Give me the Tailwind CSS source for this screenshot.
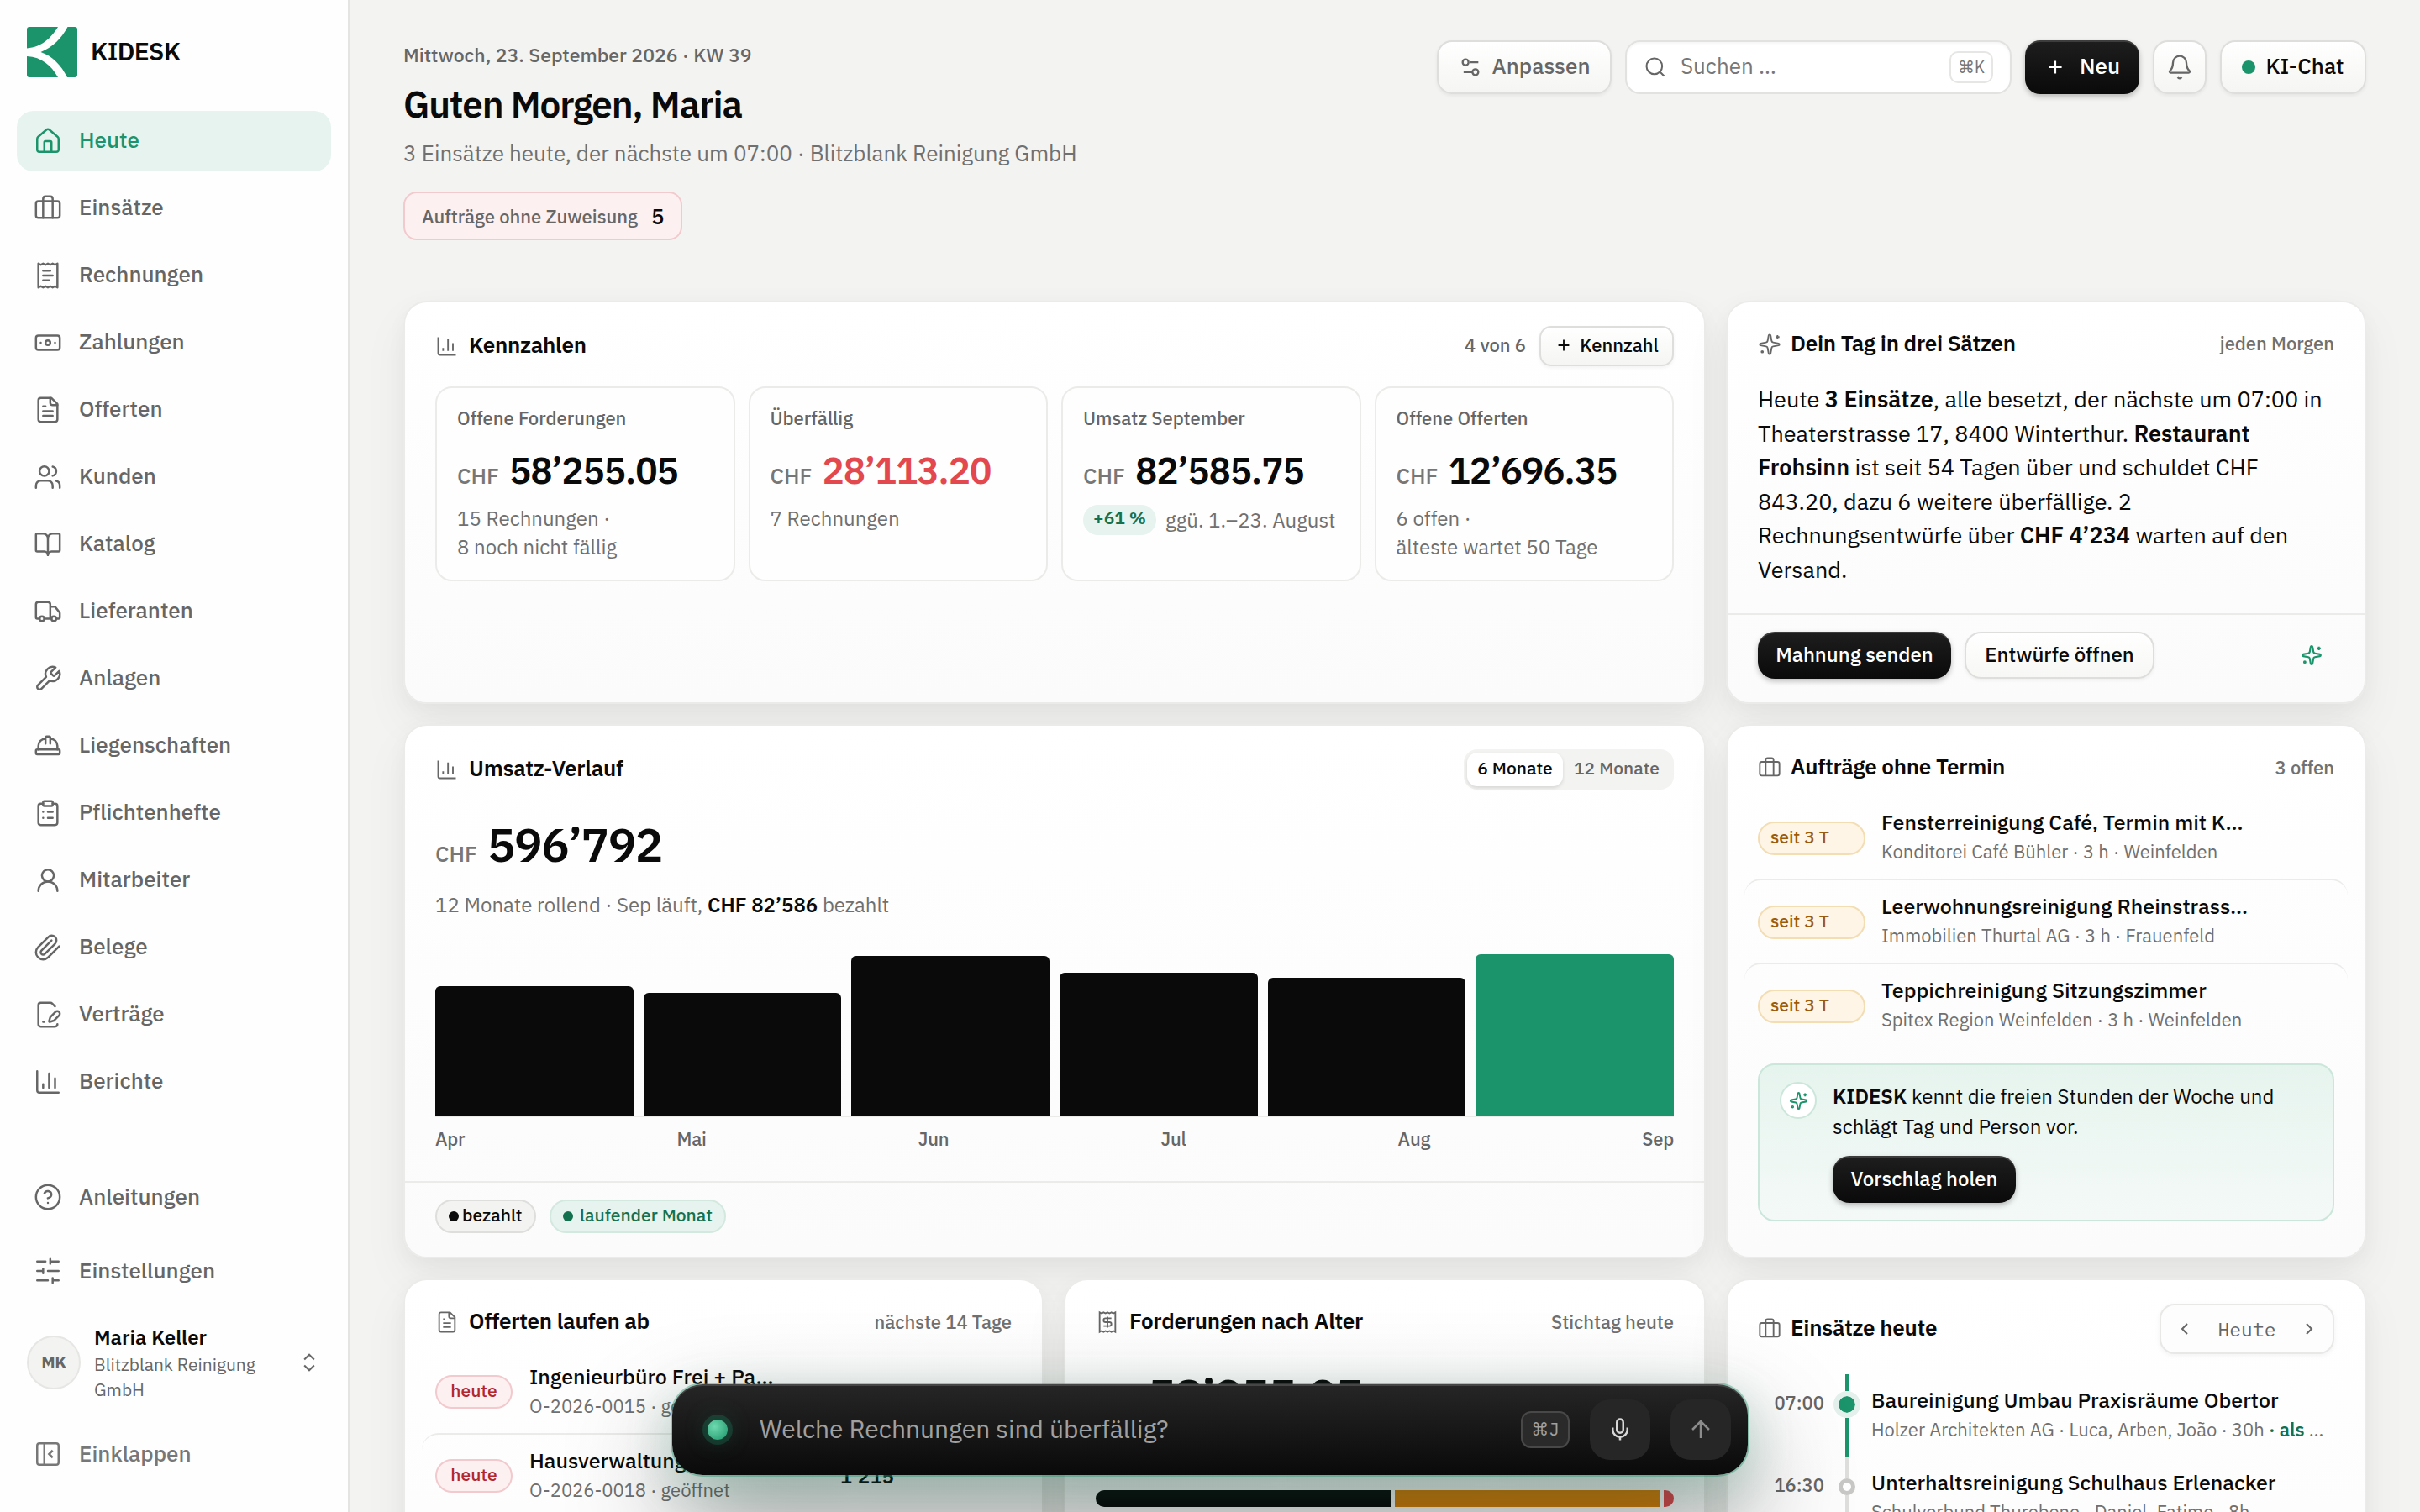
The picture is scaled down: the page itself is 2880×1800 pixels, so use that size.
<!DOCTYPE html>
<html lang="de">
<head>
<meta charset="utf-8">
<title>KIDESK – Heute</title>
<script src="https://cdn.jsdelivr.net/npm/@tailwindcss/browser@4"></script>
</head>
<body class="h-[1800px] w-[2880px] overflow-hidden bg-[#f3f3f1] font-['IBM_Plex_Sans',Roboto,sans-serif] text-[#0a0a0a] antialiased">

<!-- Icon set -->
<svg class="hidden">
  <symbol id="home" viewBox="0 0 24 24"><path d="M15 21v-8a1 1 0 0 0-1-1h-4a1 1 0 0 0-1 1v8"/><path d="M3 10a2 2 0 0 1 .709-1.528l7-6a2 2 0 0 1 2.582 0l7 6A2 2 0 0 1 21 10v9a2 2 0 0 1-2 2H5a2 2 0 0 1-2-2z"/></symbol>
  <symbol id="case" viewBox="0 0 24 24"><path d="M16 20V4a2 2 0 0 0-2-2h-4a2 2 0 0 0-2 2v16"/><rect x="2" y="6" width="20" height="14" rx="2"/></symbol>
  <symbol id="receipt" viewBox="0 0 24 24"><path d="M4 2v20l2-1 2 1 2-1 2 1 2-1 2 1 2-1 2 1V2l-2 1-2-1-2 1-2-1-2 1-2-1-2 1Z"/><path d="M14 8H8M16 12H8M13 16H8"/></symbol>
  <symbol id="receipt-dollar" viewBox="0 0 24 24"><path d="M4 2v20l2-1 2 1 2-1 2 1 2-1 2 1 2-1 2 1V2l-2 1-2-1-2 1-2-1-2 1-2-1-2 1Z"/><path d="M16 8h-6a2 2 0 1 0 0 4h4a2 2 0 1 1 0 4H8M12 17.5v-11"/></symbol>
  <symbol id="banknote" viewBox="0 0 24 24"><rect x="2" y="6" width="20" height="12" rx="2"/><circle cx="12" cy="12" r="2"/><path d="M6 12h.01M18 12h.01"/></symbol>
  <symbol id="file" viewBox="0 0 24 24"><path d="M15 2H6a2 2 0 0 0-2 2v16a2 2 0 0 0 2 2h12a2 2 0 0 0 2-2V7Z"/><path d="M14 2v4a2 2 0 0 0 2 2h4M10 9H8M16 13H8M16 17H8"/></symbol>
  <symbol id="users" viewBox="0 0 24 24"><path d="M16 21v-2a4 4 0 0 0-4-4H6a4 4 0 0 0-4 4v2"/><circle cx="9" cy="7" r="4"/><path d="M22 21v-2a4 4 0 0 0-3-3.87M16 3.13a4 4 0 0 1 0 7.75"/></symbol>
  <symbol id="book" viewBox="0 0 24 24"><path d="M12 7v14"/><path d="M3 18a1 1 0 0 1-1-1V4a1 1 0 0 1 1-1h5a4 4 0 0 1 4 4 4 4 0 0 1 4-4h5a1 1 0 0 1 1 1v13a1 1 0 0 1-1 1h-6a3 3 0 0 0-3 3 3 3 0 0 0-3-3z"/></symbol>
  <symbol id="truck" viewBox="0 0 24 24"><path d="M14 18V6a2 2 0 0 0-2-2H4a2 2 0 0 0-2 2v11a1 1 0 0 0 1 1h2M15 18H9M19 18h2a1 1 0 0 0 1-1v-3.65a1 1 0 0 0-.22-.624l-3.48-4.35A1 1 0 0 0 17.52 8H14"/><circle cx="17" cy="18" r="2"/><circle cx="7" cy="18" r="2"/></symbol>
  <symbol id="wrench" viewBox="0 0 24 24"><path d="M14.7 6.3a1 1 0 0 0 0 1.4l1.6 1.6a1 1 0 0 0 1.4 0l3.77-3.77a6 6 0 0 1-7.94 7.94l-6.91 6.91a2.12 2.12 0 0 1-3-3l6.91-6.91a6 6 0 0 1 7.94-7.94l-3.76 3.76z"/></symbol>
  <symbol id="hat" viewBox="0 0 24 24"><path d="M10 10V5a1 1 0 0 1 1-1h2a1 1 0 0 1 1 1v5M14 6a6 6 0 0 1 6 6v3M4 15v-3a6 6 0 0 1 6-6"/><rect x="2" y="15" width="20" height="4" rx="1"/></symbol>
  <symbol id="clipboard" viewBox="0 0 24 24"><rect x="8" y="2" width="8" height="4" rx="1"/><path d="M16 4h2a2 2 0 0 1 2 2v14a2 2 0 0 1-2 2H6a2 2 0 0 1-2-2V6a2 2 0 0 1 2-2h2M12 11h4M12 16h4M8 11h.01M8 16h.01"/></symbol>
  <symbol id="user" viewBox="0 0 24 24"><circle cx="12" cy="8" r="5"/><path d="M20 21a8 8 0 0 0-16 0"/></symbol>
  <symbol id="clip" viewBox="0 0 24 24"><path d="m21.44 11.05-9.19 9.19a6 6 0 0 1-8.49-8.49l8.57-8.57A4 4 0 1 1 18 8.84l-8.59 8.57a2 2 0 0 1-2.83-2.83l8.49-8.48"/></symbol>
  <symbol id="file-pen" viewBox="0 0 24 24"><path d="m18 5-2.414-2.414A2 2 0 0 0 14.172 2H6a2 2 0 0 0-2 2v16a2 2 0 0 0 2 2h12a2 2 0 0 0 2-2"/><path d="M21.378 12.626a1 1 0 0 0-3.004-3.004l-4.01 4.012a2 2 0 0 0-.506.854l-.837 2.87a.5.5 0 0 0 .62.62l2.87-.837a2 2 0 0 0 .854-.506zM8 18h1"/></symbol>
  <symbol id="chart" viewBox="0 0 24 24"><path d="M3 3v16a2 2 0 0 0 2 2h16M18 17V9M13 17V5M8 17v-3"/></symbol>
  <symbol id="help" viewBox="0 0 24 24"><circle cx="12" cy="12" r="10"/><path d="M9.09 9a3 3 0 0 1 5.83 1c0 2-3 3-3 3M12 17h.01"/></symbol>
  <symbol id="sliders" viewBox="0 0 24 24"><path d="M21 4h-7M10 4H3M21 12h-9M8 12H3M21 20h-5M12 20H3M14 2v4M8 10v4M16 18v4"/></symbol>
  <symbol id="updown" viewBox="0 0 24 24"><path d="m7 15 5 5 5-5M7 9l5-5 5 5"/></symbol>
  <symbol id="panel" viewBox="0 0 24 24"><rect x="3" y="3" width="18" height="18" rx="2"/><path d="M9 3v18M16 15l-3-3 3-3"/></symbol>
  <symbol id="settings" viewBox="0 0 24 24"><path d="M20 7h-9M14 17H5"/><circle cx="17" cy="17" r="3"/><circle cx="7" cy="7" r="3"/></symbol>
  <symbol id="search" viewBox="0 0 24 24"><circle cx="11" cy="11" r="8"/><path d="m21 21-4.3-4.3"/></symbol>
  <symbol id="plus" viewBox="0 0 24 24"><path d="M5 12h14M12 5v14"/></symbol>
  <symbol id="bell" viewBox="0 0 24 24"><path d="M10.268 21a2 2 0 0 0 3.464 0"/><path d="M3.262 15.326A1 1 0 0 0 4 17h16a1 1 0 0 0 .74-1.673C19.41 13.956 18 12.499 18 8A6 6 0 0 0 6 8c0 4.499-1.411 5.956-2.738 7.326"/></symbol>
  <symbol id="sparkles" viewBox="0 0 24 24"><path d="M11.017 2.814a1 1 0 0 1 1.966 0l1.051 5.558a2 2 0 0 0 1.594 1.594l5.558 1.051a1 1 0 0 1 0 1.966l-5.558 1.051a2 2 0 0 0-1.594 1.594l-1.051 5.558a1 1 0 0 1-1.966 0l-1.051-5.558a2 2 0 0 0-1.594-1.594l-5.558-1.051a1 1 0 0 1 0-1.966l5.558-1.051a2 2 0 0 0 1.594-1.594zM20 2.500v4M22 4.500h-4"/><circle cx="4.500" cy="19.500" r=".8"/></symbol>
  <symbol id="left" viewBox="0 0 24 24"><path d="m15 18-6-6 6-6"/></symbol>
  <symbol id="right" viewBox="0 0 24 24"><path d="m9 18 6-6-6-6"/></symbol>
  <symbol id="mic" viewBox="0 0 24 24"><path d="M12 19v3M19 10v2a7 7 0 0 1-14 0v-2"/><rect x="9" y="2" width="6" height="13" rx="3"/></symbol>
  <symbol id="up" viewBox="0 0 24 24"><path d="m5 12 7-7 7 7M12 19V5"/></symbol>
</svg>

<div class="flex h-full">

  <!-- Sidebar -->
  <aside class="relative z-20 flex h-[1800px] w-[416px] shrink-0 flex-col border-r-2 border-[#e4e4e2] bg-[#fefefe] px-5 pt-8 text-[26px] font-medium text-[#666]">
    <div class="flex h-[60px] items-center gap-4 px-3">
      <svg class="size-[60px]" viewBox="0 0 60 60"><rect width="60" height="60" rx="3" fill="#1b946c"/><path d="M0 25.500C18 24 29 13 37 0h11.500C41 14 31 24 16.500 30C31 35 41 46 48 60H37C29 46 18 36 0 35z" fill="#fefefe"/></svg>
      <span class="mb-[3px] text-[30px] font-semibold tracking-[-0.022em] text-[#0a0a0a]">KIDESK</span>
    </div>
    <nav class="mt-10 flex flex-col gap-2 *:flex *:h-[72px] *:items-center *:gap-5 *:rounded-[20px] *:px-5 *:pb-[3px] [&_svg]:mt-[3px] [&_svg]:size-[34px] [&_svg]:fill-none [&_svg]:stroke-current [&_svg]:stroke-[1.75] [&_svg]:[stroke-linecap:round] [&_svg]:[stroke-linejoin:round]">
      <a class="bg-[#e6f3ee] text-[#1b946c]"><svg><use href="#home"/></svg>Heute</a>
      <a><svg><use href="#case"/></svg>Einsätze</a>
      <a><svg><use href="#receipt"/></svg>Rechnungen</a>
      <a><svg><use href="#banknote"/></svg>Zahlungen</a>
      <a><svg><use href="#file"/></svg>Offerten</a>
      <a><svg><use href="#users"/></svg>Kunden</a>
      <a><svg><use href="#book"/></svg>Katalog</a>
      <a><svg><use href="#truck"/></svg>Lieferanten</a>
      <a><svg><use href="#wrench"/></svg>Anlagen</a>
      <a><svg><use href="#hat"/></svg>Liegenschaften</a>
      <a><svg><use href="#clipboard"/></svg>Pflichtenhefte</a>
      <a><svg><use href="#user"/></svg>Mitarbeiter</a>
      <a><svg><use href="#clip"/></svg>Belege</a>
      <a><svg><use href="#file-pen"/></svg>Verträge</a>
      <a><svg><use href="#chart"/></svg>Berichte</a>
    </nav>
    <div class="mt-[65px] flex flex-col gap-4 *:flex *:h-[72px] *:items-center *:gap-5 *:px-5 *:pb-[2px] [&_svg]:mt-[2px] [&_svg]:size-[34px] [&_svg]:fill-none [&_svg]:stroke-current [&_svg]:stroke-[1.75] [&_svg]:[stroke-linecap:round] [&_svg]:[stroke-linejoin:round]">
      <a><svg><use href="#help"/></svg>Anleitungen</a>
      <a><svg><use href="#sliders"/></svg>Einstellungen</a>
    </div>
    <div class="mt-[27px] flex h-[92px] items-center gap-4 px-3">
      <div class="flex size-16 items-center justify-center rounded-full border-2 border-[#e6e6e4] bg-[#f3f3f1] text-[20px] font-bold tracking-[-0.02em]">MK</div>
      <div class="flex-1">
        <div class="text-[24px] leading-[34px] font-semibold text-[#0a0a0a]">Maria Keller</div>
        <div class="text-[21px] leading-[30px] font-normal">Blitzblank Reinigung<br>GmbH</div>
      </div>
      <svg class="size-7 fill-none stroke-current stroke-[1.75]"><use href="#updown"/></svg>
    </div>
    <a class="mt-[27px] flex h-[72px] items-center gap-5 px-5 pb-px text-[#777]"><svg class="mt-px size-[34px] fill-none stroke-current stroke-[1.75]"><use href="#panel"/></svg>Einklappen</a>
  </aside>

  <main class="relative h-[1800px] flex-1 overflow-hidden px-16 pt-[47px]">

    <!-- Page header -->
    <header class="flex items-start justify-between">
      <div>
        <p class="text-[23px] leading-9 font-medium text-[#666]">Mittwoch, 23. September 2026 · KW 39</p>
        <h1 class="mt-[13px] text-[44px] leading-[56px] font-semibold tracking-[-0.025em]">Guten Morgen, Maria</h1>
        <p class="mt-3 text-[26px] leading-9 text-[#707070]">3 Einsätze heute, der nächste um 07:00 · Blitzblank Reinigung GmbH</p>
        <div class="mt-7 inline-flex h-[58px] items-center gap-4 rounded-2xl border-2 border-[#f2c9cd] bg-[#fdf0f0] px-5"><span class="text-[22px] font-medium text-[#666]">Aufträge ohne Zuweisung</span><span class="text-[26px] font-medium">5</span></div>
      </div>
      <div class="mt-px flex gap-4 text-[26px] font-medium *:flex *:h-16 *:items-center *:rounded-[18px] *:pb-[3px] [&_svg]:mt-[3px]">
        <button class="w-[208px] justify-center gap-3 border-2 border-[#dededc] bg-linear-to-b from-white to-[#f5f5f3] text-[#666] shadow-[0_2px_4px_rgba(0,0,0,0.06)]"><svg class="size-7 fill-none stroke-current stroke-2"><use href="#settings"/></svg>Anpassen</button>
        <div class="w-[460px] gap-4 border-2 border-[#e2e2e0] bg-white pr-5 pl-5 font-normal text-[#777] shadow-[inset_0_2px_3px_rgba(0,0,0,0.04)]"><svg class="size-7 fill-none stroke-[#666] stroke-[1.75]"><use href="#search"/></svg><span class="flex-1">Suchen …</span><kbd class="mt-[3px] flex h-[38px] w-[52px] items-center justify-center rounded-[10px] border-2 border-[#e6e6e4] bg-white font-['IBM_Plex_Mono','Liberation_Mono','DejaVu_Sans',monospace] text-[20px] text-[#777]">⌘K</kbd></div>
        <button class="w-[136px] justify-center gap-4 bg-linear-to-b from-[#1e1e1e] to-[#0a0a0a] text-white shadow-[inset_0_2px_0_rgba(255,255,255,0.14),0_3px_6px_rgba(0,0,0,0.25)]"><svg class="size-[26px] fill-none stroke-current stroke-2"><use href="#plus"/></svg>Neu</button>
        <button class="w-16 justify-center border-2 border-[#dededc] bg-linear-to-b from-white to-[#f5f5f3] text-[#666] shadow-[0_2px_4px_rgba(0,0,0,0.06)]"><svg class="size-8 fill-none stroke-current stroke-[1.75]"><use href="#bell"/></svg></button>
        <button class="w-[174px] justify-center gap-3 border-2 border-[#dededc] bg-linear-to-b from-white to-[#f5f5f3] shadow-[0_2px_4px_rgba(0,0,0,0.06)]"><i class="mt-[3px] size-4 rounded-full bg-[#1b946c]"></i>KI-Chat</button>
      </div>
    </header>

    <!-- Dashboard grid -->
    <div class="mt-[72px] grid grid-cols-[762px_764px_762px] grid-rows-[480px_636px_560px] gap-6 *:flex *:flex-col *:rounded-[28px] *:border-2 *:border-[#ebebe9] *:bg-linear-to-b *:from-white *:to-[#fbfbfb] *:px-9 *:shadow-[0_8px_24px_rgba(0,0,0,0.035),0_24px_56px_rgba(0,0,0,0.05)]">

      <section class="col-span-2">
        <div class="mt-7 flex h-12 items-center">
          <svg class="size-7 fill-none stroke-[#666] stroke-[1.6]"><use href="#chart"/></svg>
          <h2 class="mb-[3px] ml-3 flex-1 text-[26px] font-semibold tracking-[-0.01em]">Kennzahlen</h2>
          <span class="mb-[3px] text-[22px] font-medium text-[#666]">4 von 6</span>
          <button class="ml-4 flex h-12 w-40 items-center justify-center gap-2 rounded-[14px] border-2 border-[#dededc] bg-linear-to-b from-white to-[#f5f5f3] pb-[3px] text-[22px] font-medium shadow-[0_2px_4px_rgba(0,0,0,0.05)]"><svg class="mt-px size-[22px] fill-none stroke-current stroke-2"><use href="#plus"/></svg>Kennzahl</button>
        </div>
        <div class="mt-6 grid grid-cols-4 gap-4 *:h-[232px] *:rounded-[20px] *:border-2 *:border-[#ebebe9] *:bg-[#fefefe] *:px-6 *:pt-5">
          <div>
            <p class="text-[22px] leading-8 font-medium text-[#666]">Offene Forderungen</p>
            <p class="mt-5 flex h-[52px] items-baseline gap-3 leading-[52px]"><span class="text-[26px] font-medium text-[#777]">CHF</span><b class="text-[44px] font-semibold tracking-[-0.025em]">58’255.05</b></p>
            <p class="mt-[14px] text-[24px] leading-[34px] text-[#707070]">15 Rechnungen ·<br>8 noch nicht fällig</p>
          </div>
          <div>
            <p class="text-[22px] leading-8 font-medium text-[#666]">Überfällig</p>
            <p class="mt-5 flex h-[52px] items-baseline gap-3 leading-[52px]"><span class="text-[26px] font-medium text-[#777]">CHF</span><b class="text-[44px] font-semibold tracking-[-0.025em] text-[#e2484d]">28’113.20</b></p>
            <p class="mt-[14px] text-[24px] leading-[34px] text-[#707070]">7 Rechnungen</p>
          </div>
          <div>
            <p class="text-[22px] leading-8 font-medium text-[#666]">Umsatz September</p>
            <p class="mt-5 flex h-[52px] items-baseline gap-3 leading-[52px]"><span class="text-[26px] font-medium text-[#777]">CHF</span><b class="text-[44px] font-semibold tracking-[-0.025em]">82’585.75</b></p>
            <p class="mt-[14px] flex items-center gap-[11px] text-[24px] leading-9 whitespace-nowrap text-[#707070]"><span class="flex h-9 w-[87px] items-center justify-center rounded-full bg-[#e6f3ee] pb-[5px] text-[21px] font-semibold text-[#14714f]">+61 %</span><span class="mt-px">ggü. 1.–23. August</span></p>
          </div>
          <div>
            <p class="text-[22px] leading-8 font-medium text-[#666]">Offene Offerten</p>
            <p class="mt-5 flex h-[52px] items-baseline gap-3 leading-[52px]"><span class="text-[26px] font-medium text-[#777]">CHF</span><b class="text-[44px] font-semibold tracking-[-0.025em]">12’696.35</b></p>
            <p class="mt-[14px] text-[24px] leading-[34px] text-[#707070]">6 offen ·<br>älteste wartet 50 Tage</p>
          </div>
        </div>
      </section>

      <section>
        <div class="mt-8 flex h-9 items-center">
          <svg class="size-7 fill-none stroke-[#666] stroke-[1.6]"><use href="#sparkles"/></svg>
          <h2 class="mb-1 ml-[11px] flex-1 text-[26px] font-semibold tracking-[-0.01em]">Dein Tag in drei Sätzen</h2>
          <span class="mb-1 text-[22px] font-medium text-[#707070]">jeden Morgen</span>
        </div>
        <p class="mt-[27px] text-[27px] leading-[40.5px] whitespace-nowrap">Heute <b class="font-semibold">3 Einsätze</b>, alle besetzt, der nächste um 07:00 in<br>Theaterstrasse 17, 8400 Winterthur. <b class="font-semibold">Restaurant<br>Frohsinn</b> ist seit 54 Tagen über und schuldet CHF<br>843.20, dazu 6 weitere überfällige. 2<br>Rechnungsentwürfe über <b class="font-semibold">CHF 4’234</b> warten auf den<br>Versand.</p>
        <div class="-mx-9 mt-auto flex h-[106px] items-start gap-4 border-t-2 border-[#ebebe9] px-9 pt-5 text-[24px] font-medium">
          <button class="h-14 w-[230px] rounded-[20px] bg-linear-to-b from-[#1e1e1e] to-[#0a0a0a] pb-[3px] text-white shadow-[inset_0_2px_0_rgba(255,255,255,0.14),0_3px_6px_rgba(0,0,0,0.25)]">Mahnung senden</button>
          <button class="h-14 w-[226px] rounded-[20px] border-2 border-[#dededc] bg-linear-to-b from-white to-[#f7f7f5] pb-[3px] shadow-[0_2px_4px_rgba(0,0,0,0.05)]">Entwürfe öffnen</button>
          <svg class="mt-[15px] mr-3.5 ml-auto size-[26px] fill-none stroke-[#1b946c] stroke-2"><use href="#sparkles"/></svg>
        </div>
      </section>

      <section class="col-span-2">
        <div class="mt-7 flex h-12 items-center">
          <svg class="size-7 fill-none stroke-[#666] stroke-[1.6]"><use href="#chart"/></svg>
          <h2 class="mb-[3px] ml-3 flex-1 text-[26px] font-semibold tracking-[-0.01em]">Umsatz-Verlauf</h2>
          <div class="flex h-12 w-[250px] items-center rounded-2xl bg-[#f3f3f1] p-1 text-[21px] font-medium text-[#666]"><span class="flex h-10 w-[114px] items-center justify-center rounded-xl bg-white pb-[3px] text-[#0a0a0a] shadow-[0_2px_4px_rgba(0,0,0,0.12)]">6 Monate</span><span class="flex-1 pb-[3px] text-center">12 Monate</span></div>
        </div>
        <p class="mt-[33px] flex h-16 items-baseline gap-3 leading-[64px]"><span class="text-[26px] font-medium text-[#777]">CHF</span><b class="text-[56px] font-semibold tracking-[-0.025em]">596’792</b></p>
        <p class="mt-[22px] text-[24px] leading-9 text-[#707070]">12 Monate rollend · Sep läuft, <b class="font-semibold text-[#0a0a0a]">CHF 82’586</b> bezahlt</p>
        <div class="mt-[41px] flex h-[194px] items-end gap-3 border-b-2 border-[#ebebe9] *:flex-1 *:rounded-t-[6px] *:bg-[#0a0a0a]">
          <div style="height:154px"></div><div style="height:146px"></div><div style="height:190px"></div><div style="height:170px"></div><div style="height:164px"></div><div class="!bg-[#1b946c]" style="height:192px"></div>
        </div>
        <div class="mt-[10px] flex justify-between text-[22px] leading-8 font-medium tracking-[-0.01em] text-[#666]"><span>Apr</span><span>Mai</span><span>Jun</span><span>Jul</span><span>Aug</span><span>Sep</span></div>
        <div class="-mx-9 mt-auto flex h-[90px] items-start gap-4 border-t-2 border-[#ebebe9] px-9 pt-5 text-[21px] font-medium *:flex *:h-10 *:items-center *:rounded-full *:border-2 *:pb-[3px] *:pl-3.5 [&_i]:mt-[3px]">
          <span class="w-[120px] gap-1 border-[#dededc] bg-[#f3f3f1]"><i class="size-3 rounded-full bg-current"></i>bezahlt</span>
          <span class="w-[210px] gap-2 border-[#d3e9e0] bg-[#e6f3ee] text-[#14714f]"><i class="size-3 rounded-full bg-current"></i>laufender Monat</span>
        </div>
      </section>

      <section>
        <div class="mt-8 flex h-9 items-center">
          <svg class="size-7 fill-none stroke-[#666] stroke-[1.6]"><use href="#case"/></svg>
          <h2 class="mb-[3px] ml-[11px] flex-1 text-[26px] font-semibold tracking-[-0.01em]">Aufträge ohne Termin</h2>
          <span class="mb-px text-[22px] font-medium text-[#707070]">3 offen</span>
        </div>
        <div class="-mx-4 mt-4 *:flex *:items-center *:gap-[19px] *:rounded-[20px] *:border-[#ebebe9] *:px-4 *:py-3.5">
          <div>
            <span class="mt-[2px] flex h-10 w-32 items-center rounded-full border-2 border-[#f3ddb2] bg-[#fef5e6] pb-[3px] pl-[13px] text-[21px] font-medium text-[#9a5b0b]">seit 3 T</span>
            <div class="whitespace-nowrap"><p class="text-[25px] leading-[34px] font-medium">Fensterreinigung Café, Termin mit K…</p><p class="text-[22px] leading-9 text-[#707070]">Konditorei Café Bühler · 3 h · Weinfelden</p></div>
          </div>
          <div class="border-t-2">
            <span class="mt-[2px] flex h-10 w-32 items-center rounded-full border-2 border-[#f3ddb2] bg-[#fef5e6] pb-[3px] pl-[13px] text-[21px] font-medium text-[#9a5b0b]">seit 3 T</span>
            <div class="whitespace-nowrap"><p class="text-[25px] leading-[34px] font-medium">Leerwohnungsreinigung Rheinstrass…</p><p class="text-[22px] leading-9 text-[#707070]">Immobilien Thurtal AG · 3 h · Frauenfeld</p></div>
          </div>
          <div class="border-t-2">
            <span class="mt-[2px] flex h-10 w-32 items-center rounded-full border-2 border-[#f3ddb2] bg-[#fef5e6] pb-[3px] pl-[13px] text-[21px] font-medium text-[#9a5b0b]">seit 3 T</span>
            <div class="whitespace-nowrap"><p class="text-[25px] leading-[34px] font-medium">Teppichreinigung Sitzungszimmer</p><p class="text-[22px] leading-9 text-[#707070]">Spitex Region Weinfelden · 3 h · Weinfelden</p></div>
          </div>
        </div>
        <div class="mt-5 flex h-[188px] items-start gap-[19px] rounded-[20px] border-2 border-[#cbe6db] bg-linear-to-b from-[#e6f4ee] to-[#f4f9f7] px-6 pt-5">
          <span class="flex size-11 items-center justify-center rounded-full border-2 border-[#cbe6db] bg-white"><svg class="size-[23px] fill-none stroke-[#1b946c] stroke-2"><use href="#sparkles"/></svg></span>
          <div class="-mt-px text-[24px] leading-9 whitespace-nowrap">
            <p><b class="font-semibold">KIDESK</b> kennt die freien Stunden der Woche und<br>schlägt Tag und Person vor.</p>
            <button class="mt-[17px] h-14 w-[218px] rounded-[20px] bg-linear-to-b from-[#1e1e1e] to-[#0a0a0a] pb-[3px] font-medium text-white shadow-[inset_0_2px_0_rgba(255,255,255,0.14),0_3px_6px_rgba(0,0,0,0.25)]">Vorschlag holen</button>
          </div>
        </div>
      </section>

      <section>
        <div class="mt-8 flex h-9 items-center">
          <svg class="size-7 fill-none stroke-[#666] stroke-[1.6]"><use href="#file"/></svg>
          <h2 class="mb-[3px] ml-3 flex-1 text-[26px] font-semibold tracking-[-0.01em]">Offerten laufen ab</h2>
          <span class="mb-px text-[22px] font-medium text-[#707070]">nächste 14 Tage</span>
        </div>
        <div class="-mx-4 mt-4 *:flex *:items-center *:gap-5 *:rounded-[20px] *:border-[#ebebe9] *:px-4 *:py-3.5">
          <div>
            <span class="flex h-10 w-[92px] items-center justify-center rounded-full border-2 border-[#f2c9cd] bg-[#fdf0f0] pb-[2px] text-[21px] font-medium text-[#b3262e]">heute</span>
            <div class="w-[300px] whitespace-nowrap"><p class="text-[25px] leading-[34px] font-medium">Ingenieurbüro Frei + Pa…</p><p class="text-[22px] leading-9 text-[#707070]">O-2026-0015 · geöffnet</p></div>
            <b class="w-[114px] text-right text-[24px] font-semibold">1’480</b>
          </div>
          <div class="border-t-2">
            <span class="flex h-10 w-[92px] items-center justify-center rounded-full border-2 border-[#f2c9cd] bg-[#fdf0f0] pb-[2px] text-[21px] font-medium text-[#b3262e]">heute</span>
            <div class="w-[300px] whitespace-nowrap"><p class="text-[25px] leading-[34px] font-medium">Hausverwaltung …</p><p class="text-[22px] leading-9 text-[#707070]">O-2026-0018 · geöffnet</p></div>
            <b class="w-[114px] text-right text-[24px] font-semibold">1’215</b>
          </div>
        </div>
      </section>

      <section>
        <div class="mt-8 flex h-9 items-center">
          <svg class="size-7 fill-none stroke-[#666] stroke-[1.6]"><use href="#receipt-dollar"/></svg>
          <h2 class="mb-[3px] ml-3 flex-1 text-[26px] font-semibold tracking-[-0.01em]">Forderungen nach Alter</h2>
          <span class="mb-px text-[22px] font-medium text-[#707070]">Stichtag heute</span>
        </div>
        <p class="mt-[37px] flex h-16 items-baseline gap-3 leading-[64px]"><span class="text-[26px] font-medium text-[#777]">CHF</span><b class="text-[56px] font-semibold tracking-[-0.025em]">58’255.05</b></p>
        <div class="mt-[81px] flex h-5 gap-1 overflow-hidden rounded-[10px]"><i class="flex-1 bg-[#0a0a0a]"></i><i class="w-[316px] bg-[#d97f0a]"></i><i class="w-3 bg-[#e2484d]"></i></div>
      </section>

      <section>
        <div class="mt-7 flex h-[60px] items-center">
          <svg class="size-7 fill-none stroke-[#666] stroke-[1.6]"><use href="#case"/></svg>
          <h2 class="mb-[3px] ml-[11px] flex-1 text-[26px] font-semibold tracking-[-0.01em]">Einsätze heute</h2>
          <div class="flex h-[60px] w-[208px] items-center justify-between rounded-[18px] border-2 border-[#e8e8e6] bg-[#fdfdfd] px-4 font-['IBM_Plex_Mono','Liberation_Mono',monospace] text-[23px] text-[#666] shadow-[0_2px_6px_rgba(0,0,0,0.05)]"><svg class="size-6 fill-none stroke-current stroke-2"><use href="#left"/></svg>Heute<svg class="size-6 fill-none stroke-current stroke-2"><use href="#right"/></svg></div>
        </div>
        <div class="mt-6 text-[22px] text-[#666]">
          <div class="flex h-[98px]">
            <span class="w-[79px] shrink-0 pt-[17px] text-right leading-[34px] font-medium">07:00</span>
            <div class="ml-[9px] flex w-9 shrink-0 flex-col items-center"><i class="h-5 w-1 bg-[#1b946c]"></i><i class="size-8 rounded-full border-[6px] border-[#e3f0eb] bg-[#1b946c] bg-clip-padding"></i><i class="w-1 flex-1 bg-[#1b946c]"></i></div>
            <div class="ml-[11px] pt-3.5 whitespace-nowrap"><p class="text-[25px] leading-[34px] font-medium text-[#0a0a0a]">Baureinigung Umbau Praxisräume Obertor</p><p class="leading-9 text-[#707070]">Holzer Architekten AG · Luca, Arben, João · 30h <b class="font-semibold text-[#14714f]">· als</b> …</p></div>
          </div>
          <div class="flex h-[98px]">
            <span class="w-[79px] shrink-0 pt-[17px] text-right leading-[34px] font-medium">16:30</span>
            <div class="ml-[9px] flex w-9 shrink-0 flex-col items-center"><i class="h-[26px] w-1 bg-[#dededc]"></i><i class="size-5 rounded-full border-[5px] border-[#c8c8c6] bg-white"></i><i class="w-1 flex-1 bg-[#dededc]"></i></div>
            <div class="ml-[11px] pt-3.5 whitespace-nowrap"><p class="text-[25px] leading-[34px] font-medium text-[#0a0a0a]">Unterhaltsreinigung Schulhaus Erlenacker</p><p class="leading-9 text-[#707070]">Schulverbund Thurebene · Daniel, Fatime · 8h</p></div>
          </div>
        </div>
      </section>
    </div>

    <!-- Floating assistant bar -->
    <div class="absolute top-[1648px] left-[384px] z-10 flex h-[108px] w-[1280px] items-center rounded-[36px] bg-linear-to-b from-[#262626] to-[#0a0a0a] pr-5 pl-[42px] text-[#a0a0a0] shadow-[inset_0_2px_0_rgba(255,255,255,0.15),0_0_0_2px_rgba(27,148,108,0.4),0_16px_56px_rgba(27,148,108,0.22),0_56px_128px_rgba(0,0,0,0.42)]">
      <i class="size-6 rounded-full bg-radial-[at_35%_35%] from-[#6fd9ae] to-[#1b946c] shadow-[0_0_0_6px_rgba(27,148,108,0.25),0_0_28px_rgba(27,148,108,0.35)]"></i>
      <span class="mb-[3px] ml-[38px] flex-1 text-[30px]">Welche Rechnungen sind überfällig?</span>
      <kbd class="flex h-11 w-[58px] items-center justify-center rounded-xl border-2 border-[#484848] bg-[#2a2a2a] font-['IBM_Plex_Mono','Liberation_Mono','DejaVu_Sans',monospace] text-[21px]">⌘J</kbd>
      <span class="ml-6 flex size-[72px] items-center justify-center rounded-3xl bg-[#262626] text-[#d8d8d8]"><svg class="size-[30px] fill-none stroke-current stroke-2"><use href="#mic"/></svg></span>
      <span class="ml-6 flex size-[72px] items-center justify-center rounded-3xl bg-[#262626] text-[#8c8c8c]"><svg class="size-[34px] fill-none stroke-current stroke-[1.75]"><use href="#up"/></svg></span>
    </div>
  </main>
</div>
</body>
</html>
